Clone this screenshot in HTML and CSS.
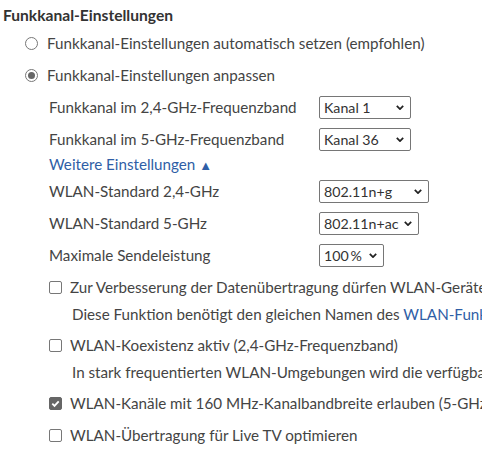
FILE: index.html
```html
<!DOCTYPE html>
<html lang="de">
<head>
    <meta charset="UTF-8">
    <meta name="viewport" content="width=device-width, initial-scale=1.0">
    <title>Funkkanal-Einstellungen</title>
    <link rel="stylesheet" href="styles.css">
</head>
<body>
    <div class="panel">
        <h2 class="title">Funkkanal-Einstellungen</h2>

        <!-- Auswahl automatisch / manuell -->
        <label class="radio-row">
            <span class="radio"></span>
            Funkkanal-Einstellungen automatisch setzen (empfohlen)
        </label>
        <label class="radio-row">
            <span class="radio checked"></span>
            Funkkanal-Einstellungen anpassen
        </label>

        <div class="manual">
            <div class="field">
                <span class="field-label">Funkkanal im 2,4-GHz-Frequenzband</span>
                <span class="select w-91">Kanal 1<svg class="chev" viewBox="0 0 10 6"><path d="M1 1l4 4 4-4"/></svg></span>
            </div>
            <div class="field">
                <span class="field-label">Funkkanal im 5-GHz-Frequenzband</span>
                <span class="select w-91">Kanal 36<svg class="chev" viewBox="0 0 10 6"><path d="M1 1l4 4 4-4"/></svg></span>
            </div>

            <a class="more" href="#">Weitere Einstellungen <span class="tri">&#9650;</span></a>

            <div class="field">
                <span class="field-label">WLAN-Standard 2,4-GHz</span>
                <span class="select w-109">802.11n+g<svg class="chev" viewBox="0 0 10 6"><path d="M1 1l4 4 4-4"/></svg></span>
            </div>
            <div class="field">
                <span class="field-label">WLAN-Standard 5-GHz</span>
                <span class="select w-99">802.11n+ac<svg class="chev" viewBox="0 0 10 6"><path d="M1 1l4 4 4-4"/></svg></span>
            </div>
            <div class="field">
                <span class="field-label">Maximale Sendeleistung</span>
                <span class="select w-64">100&#8201;%<svg class="chev" viewBox="0 0 10 6"><path d="M1 1l4 4 4-4"/></svg></span>
            </div>

            <!-- Optionen -->
            <div class="opt">
                <span class="box"></span>
                Zur Verbesserung der Datenübertragung dürfen WLAN-Geräte auf mehreren Funkbändern gleichzeitig angemeldet sein.
            </div>
            <div class="hint">Diese Funktion benötigt den gleichen Namen des <a href="#">WLAN-Funknetzes (SSID)</a> in allen Frequenzbändern.</div>

            <div class="opt">
                <span class="box"></span>
                WLAN-Koexistenz aktiv (2,4-GHz-Frequenzband)
            </div>
            <div class="hint">In stark frequentierten WLAN-Umgebungen wird die verfügbare Bandbreite reduziert.</div>

            <div class="opt">
                <span class="box checked"><svg viewBox="0 0 12 12"><path d="M2.5 6.2l2.4 2.4 4.6-5"/></svg></span>
                WLAN-Kanäle mit 160 MHz-Kanalbandbreite erlauben (5-GHz-Frequenzband)
            </div>
            <div class="opt">
                <span class="box"></span>
                WLAN-Übertragung für Live TV optimieren
            </div>
        </div>
    </div>
</body>
</html>
```

FILE: styles.css
```css
body {
    margin: 0;
    font-family: Lato, "Open Sans", sans-serif;
    font-size: 15.2px;
    color: #444;
    background: #fff;
    overflow: hidden;
    white-space: nowrap;
}
.panel {
    padding-left: 3px;
}
.title {
    margin: 4px 0 0;
    font-size: 15.6px;
    line-height: 23px;
    font-weight: bold;
    color: #333;
}
/* Radio-Zeilen */
.radio-row {
    display: flex;
    align-items: center;
    height: 32px;
    padding-left: 22px;
}
.radio {
    width: 11px;
    height: 11px;
    border: 1px solid #777;
    border-radius: 50%;
    margin-right: 9px;
    display: flex;
    align-items: center;
    justify-content: center;
}
.radio.checked::after {
    content: "";
    width: 7px;
    height: 7px;
    border-radius: 50%;
    background: #666;
}
/* Einstellungen */
.manual {
    padding-left: 46px;
}
.field {
    display: flex;
    align-items: center;
    height: 32px;
}
.field-label {
    width: 270px;
}
.select {
    position: relative;
    box-sizing: border-box;
    height: 23px;
    line-height: 21px;
    border: 1px solid #767676;
    border-radius: 2px;
    padding-left: 4px;
    font-size: 14.2px;
    color: #333;
}
.w-91 { width: 92px; }
.w-109 { width: 110px; }
.w-99 { width: 100px; }
.w-64 { width: 65px; }
.chev {
    position: absolute;
    right: 6px;
    top: 8px;
    width: 8px;
    height: 5px;
    fill: none;
    stroke: #222;
    stroke-width: 2.2;
}
.more {
    display: block;
    height: 20px;
    line-height: 18px;
    color: #2f5ea6;
    text-decoration: none;
}
.tri {
    font-size: 13px;
}
/* Checkboxen */
.opt {
    display: flex;
    align-items: center;
    height: 32px;
}
.box {
    box-sizing: border-box;
    width: 13px;
    height: 13px;
    border: 1px solid #777;
    border-radius: 2px;
    margin-right: 8px;
    flex-shrink: 0;
}
.box.checked {
    background: #666;
    border-color: #666;
}
.box svg {
    display: block;
    width: 11px;
    height: 11px;
    fill: none;
    stroke: #fff;
    stroke-width: 2;
}
.hint {
    padding-left: 23px;
    line-height: 22px;
    margin-bottom: 4px;
}
.hint a {
    color: #2f5ea6;
    text-decoration: none;
}
```
